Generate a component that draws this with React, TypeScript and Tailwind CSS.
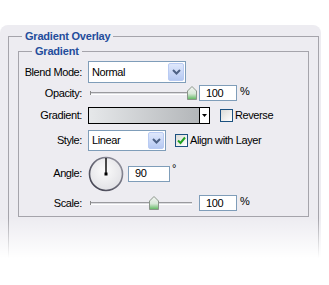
import React from 'react'

const font = "font-['Liberation_Sans',Arial,sans-serif]"

function Chevron() {
    return (
        <svg width="9" height="6" viewBox="0 0 9 6">
            <path d="M1 1 L4.5 4.5 L8 1" fill="none" stroke="#4d6185" strokeWidth="2" />
        </svg>
    )
}

function Select({ value, width }: { value: string; width: string }) {
    return (
        <div className={`${width} h-full border border-[#7f9db9] bg-white flex`}>
            <div className="flex-1 flex items-center pl-[3px]">{value}</div>
            <div className="w-[16px] m-[1px] rounded-[2px] border border-[#b9cbf3] bg-[linear-gradient(to_bottom,#dfe8fc,#b6c9f2)] flex items-center justify-center">
                <Chevron />
            </div>
        </div>
    )
}

function Checkbox({ checked }: { checked?: boolean }) {
    return (
        <div className="w-[13px] h-[13px] border border-[#1c5180] bg-[linear-gradient(135deg,#dcdcd7,#ffffff)] flex items-center justify-center">
            {checked && (
                <svg width="9" height="9" viewBox="0 0 9 9">
                    <path d="M1 4.5 L3.5 7 L8 1.5" fill="none" stroke="#21a121" strokeWidth="2" />
                </svg>
            )}
        </div>
    )
}

function Slider({ thumb }: { thumb: string }) {
    return (
        <div className="relative w-[111px] h-full">
            <div className="absolute left-[2px] top-[7px] w-[102px] h-[3px] border-t border-[#9a9a9e] border-b border-b-white bg-[#dcdce0]" />
            <div className="absolute left-[2px] top-[6px] w-[1px] h-[4px] bg-[#8a8a8a]" />
            <svg className={`absolute top-[1px] ${thumb}`} width="10" height="14" viewBox="0 0 10 14">
                <defs>
                    <linearGradient id="th" x1="0" y1="0" x2="0" y2="1">
                        <stop offset="0" stopColor="#f4f6f4" />
                        <stop offset="0.55" stopColor="#d8e8d8" />
                        <stop offset="1" stopColor="#5cb85c" />
                    </linearGradient>
                </defs>
                <path d="M0.5 5 L5 0.5 L9.5 5 V13.5 H0.5 Z" fill="url(#th)" stroke="#8a958a" />
            </svg>
        </div>
    )
}

function NumBox({ value, width }: { value: string; width: string }) {
    return (
        <div className={`${width} h-[16px] border border-[#7f9db9] bg-white flex items-center pl-[6px]`}>
            {value}
        </div>
    )
}

function Row({ label, className, children }: { label: string; className: string; children: React.ReactNode }) {
    return (
        <div className={`flex items-center ${className}`}>
            <div className="w-[63px] shrink-0 text-right">{label}</div>
            <div className="ml-[6px] flex items-center h-full">{children}</div>
        </div>
    )
}

export default function App() {
    return (
        <div className={`relative w-[329px] h-[285px] bg-white overflow-hidden ${font} text-[11px] leading-[13px] tracking-[-0.4px] text-black`}>
            <div className="mt-[25px] w-[321px] h-[260px] rounded-t-[8px] bg-[#edecf1] pt-[5px] pl-[8px]">
                <fieldset className="w-[311px] h-[260px] border border-b-0 border-[#a5a4ab] pl-[9px] pt-[2px]">
                    <legend className="ml-[4px] px-[3px] font-bold text-[#244d9c] tracking-[-0.2px]">Gradient Overlay</legend>
                    <fieldset className="w-[291px] border border-[#a5a4ab] pt-[3px] pb-[5px]">
                        <legend className="ml-[13px] px-[3px] font-bold text-[#244d9c] tracking-[-0.2px]">Gradient</legend>

                        <Row label="Blend Mode:" className="h-[22px]">
                            <Select value="Normal" width="w-[98px]" />
                        </Row>

                        <Row label="Opacity:" className="mt-[2px] h-[16px]">
                            <Slider thumb="left-[99px]" />
                            <NumBox value="100" width="w-[38px]" />
                            <span className="ml-[3px] self-start">%</span>
                        </Row>

                        <Row label="Gradient:" className="mt-[6px] h-[17px]">
                            <div className="w-[122px] h-full border border-black flex">
                                <div className="flex-1 bg-[linear-gradient(to_right,#e6e8ea,#b3b6b9)]" />
                                <div className="w-[10px] border-l border-black bg-white flex items-center justify-center">
                                    <svg width="5" height="3" viewBox="0 0 5 3"><path d="M0 0 H5 L2.5 3 Z" fill="#000" /></svg>
                                </div>
                            </div>
                            <div className="ml-[10px]"><Checkbox /></div>
                            <span className="ml-[2px]">Reverse</span>
                        </Row>

                        <Row label="Style:" className="mt-[6px] h-[21px]">
                            <Select value="Linear" width="w-[78px]" />
                            <div className="ml-[9px]"><Checkbox checked /></div>
                            <span className="ml-[2px]">Align with Layer</span>
                        </Row>

                        <Row label="Angle:" className="mt-[5px] h-[35px]">
                            <svg width="36" height="36" viewBox="0 0 36 36">
                                <defs>
                                    <radialGradient id="dial" cx="0.45" cy="0.4" r="0.6">
                                        <stop offset="0" stopColor="#fbfbfb" />
                                        <stop offset="1" stopColor="#e2e2e6" />
                                    </radialGradient>
                                    <linearGradient id="ring" x1="1" y1="0" x2="0" y2="1">
                                        <stop offset="0" stopColor="#9a9aa6" />
                                        <stop offset="1" stopColor="#3a3a48" />
                                    </linearGradient>
                                </defs>
                                <circle cx="18" cy="18" r="16.5" fill="url(#dial)" stroke="url(#ring)" strokeWidth="1.6" />
                                <line x1="18" y1="18" x2="18" y2="2" stroke="#000" strokeWidth="1.4" />
                                <rect x="16.5" y="16.5" width="3" height="3" fill="#000" />
                            </svg>
                            <div className="ml-[4px]"><NumBox value="90" width="w-[42px]" /></div>
                            <span className="ml-[2px] self-start mt-[6px]">°</span>
                        </Row>

                        <Row label="Scale:" className="mt-[4px] h-[16px]">
                            <Slider thumb="left-[61px]" />
                            <NumBox value="100" width="w-[38px]" />
                            <span className="ml-[3px] self-start">%</span>
                        </Row>
                    </fieldset>
                </fieldset>
            </div>
            <div className="absolute left-0 right-0 top-[218px] bottom-0 bg-[linear-gradient(to_bottom,rgba(255,255,255,0),#ffffff_60%)]" />
        </div>
    )
}
